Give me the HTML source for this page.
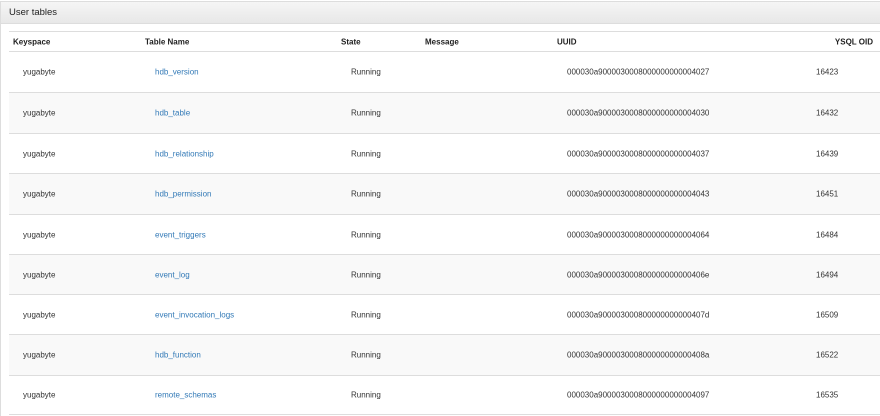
<!DOCTYPE html><html style="height:416px;overflow:hidden"><head><style>
*{margin:0;padding:0;box-sizing:border-box}
body{width:880px;height:416px;background:#fff;font-family:"Liberation Sans",Arial,sans-serif;overflow:hidden;position:relative}
.panel{position:absolute;left:0;top:1px;width:880px;height:415px;border-left:1px solid #ddd;border-top:1px solid #ddd}
.head{position:absolute;left:0;top:0;width:879px;height:22px;background:linear-gradient(#f5f5f5,#e8e8e8);border-bottom:1px solid #ddd;font-size:9.5px;color:#222;padding:5px 0 0 8px}
.row{position:absolute;left:9px;width:871px;border-top:1px solid #ddd;font-size:8px;color:#333}
.row span{position:absolute;top:50%;transform:translateY(-50%);white-space:nowrap}
.hdr{font-weight:bold;color:#222}
.g{background:#f9f9f9}
a{color:#337ab7;text-decoration:none}
</style></head><body>
<div class="panel"><div class="head">User tables</div></div>
<div class="row hdr" style="top:31px;height:20px"><span style="left:4px">Keyspace</span><span style="left:136px">Table Name</span><span style="left:332px">State</span><span style="left:416px">Message</span><span style="left:548px">UUID</span><span style="right:7px">YSQL OID</span></div>
<div class="row" style="top:51px;height:41px"><span style="left:14px">yugabyte</span><span style="left:146px"><a>hdb_version</a></span><span style="left:342px">Running</span><span style="left:558px">000030a9000030008000000000004027</span><span style="left:807px">16423</span></div>
<div class="row g" style="top:92px;height:41px"><span style="left:14px">yugabyte</span><span style="left:146px"><a>hdb_table</a></span><span style="left:342px">Running</span><span style="left:558px">000030a9000030008000000000004030</span><span style="left:807px">16432</span></div>
<div class="row" style="top:133px;height:40px"><span style="left:14px">yugabyte</span><span style="left:146px"><a>hdb_relationship</a></span><span style="left:342px">Running</span><span style="left:558px">000030a9000030008000000000004037</span><span style="left:807px">16439</span></div>
<div class="row g" style="top:173px;height:41px"><span style="left:14px">yugabyte</span><span style="left:146px"><a>hdb_permission</a></span><span style="left:342px">Running</span><span style="left:558px">000030a9000030008000000000004043</span><span style="left:807px">16451</span></div>
<div class="row" style="top:214px;height:40px"><span style="left:14px">yugabyte</span><span style="left:146px"><a>event_triggers</a></span><span style="left:342px">Running</span><span style="left:558px">000030a9000030008000000000004064</span><span style="left:807px">16484</span></div>
<div class="row g" style="top:254px;height:40px"><span style="left:14px">yugabyte</span><span style="left:146px"><a>event_log</a></span><span style="left:342px">Running</span><span style="left:558px">000030a900003000800000000000406e</span><span style="left:807px">16494</span></div>
<div class="row" style="top:294px;height:40px"><span style="left:14px">yugabyte</span><span style="left:146px"><a>event_invocation_logs</a></span><span style="left:342px">Running</span><span style="left:558px">000030a900003000800000000000407d</span><span style="left:807px">16509</span></div>
<div class="row g" style="top:334px;height:41px"><span style="left:14px">yugabyte</span><span style="left:146px"><a>hdb_function</a></span><span style="left:342px">Running</span><span style="left:558px">000030a900003000800000000000408a</span><span style="left:807px">16522</span></div>
<div class="row" style="top:375px;height:40px;border-bottom:1px solid #ddd"><span style="left:14px">yugabyte</span><span style="left:146px"><a>remote_schemas</a></span><span style="left:342px">Running</span><span style="left:558px">000030a9000030008000000000004097</span><span style="left:807px">16535</span></div>
</body></html>
